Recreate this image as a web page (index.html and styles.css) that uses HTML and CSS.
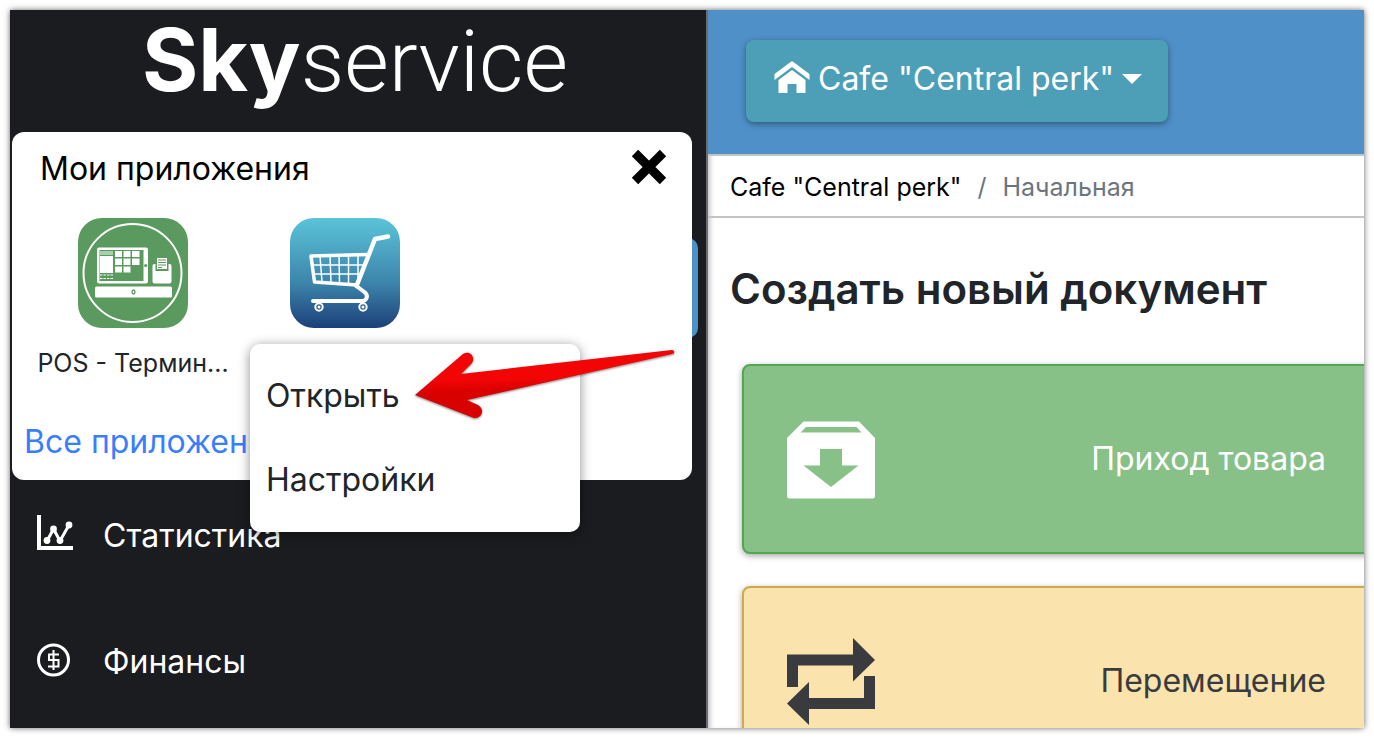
FILE: index.html
```html
<!DOCTYPE html>
<html lang="ru">
<head>
    <meta charset="UTF-8">
    <meta name="viewport" content="width=device-width, initial-scale=1.0">
    <title>Skyservice</title>
    <link rel="stylesheet" href="styles.css">
</head>
<body>
    <div class="window">
        <aside class="sidebar">
            <a href="#" class="logo"><b>Sky</b>service</a>
            <nav>
                <ul class="menu">
                    <li class="active"></li>
                    <li></li>
                    <li>
                        <a href="#">
                            <svg class="menu-icon" viewBox="0 0 36 36">
                                <path d="M2 0v33h34" fill="none" stroke="#fff" stroke-width="4"/>
                                <path d="M10 26l6.500-12 6.500 12L32 10" fill="none" stroke="#fff" stroke-width="3"/>
                                <g fill="#fff">
                                    <circle cx="10" cy="25.500" r="3.400"/>
                                    <circle cx="16.500" cy="14" r="3.400"/>
                                    <circle cx="23" cy="25.500" r="3.400"/>
                                    <circle cx="32" cy="10" r="3.400"/>
                                </g>
                            </svg>
                            Статистика
                        </a>
                    </li>
                    <li>
                        <a href="#">
                            <svg class="menu-icon" viewBox="0 0 36 36">
                                <circle cx="16.500" cy="19" r="15" fill="none" stroke="#fff" stroke-width="3"/>
                                <path d="M22 13.500H12v5.500h9.500v6.500H11M16.500 9v20" fill="none" stroke="#fff" stroke-width="2"/>
                            </svg>
                            Финансы
                        </a>
                    </li>
                </ul>
            </nav>

            <section class="apps">
                <div class="apps-head">
                    <h2>Мои приложения</h2>
                    <button class="close" aria-label="Закрыть">
                        <svg viewBox="0 0 36 36"><path d="M4 4l28 28M32 4L4 32" stroke="#000" stroke-width="9"/></svg>
                    </button>
                </div>
                <div class="apps-list">
                    <a href="#" class="app">
                        <svg viewBox="0 0 110 110">
                            <rect width="110" height="110" rx="24" fill="#5a9a5e"/>
                            <circle cx="54.500" cy="55" r="49" fill="none" stroke="#fff" stroke-width="2"/>
                            <rect x="19" y="29.500" width="51" height="36" rx="2" fill="#fff"/>
                            <path d="M21.500 32h44v31h-44z" fill="#5a9a5e"/>
                            <path d="M22 38h13v17H22zM22 33.500h13v1H22zM22 35.500h13v1H22z" fill="#fff"/>
                            <path d="M22 57h13M22 60.500h13" stroke="#fff" stroke-width="1" stroke-dasharray="2.500 1"/>
                            <path d="M37 33h7v6h-7zM45.500 33h7v6h-7zM54 33h7.500v6H54zM37 40.500h7v6.500h-7zM45.500 40.500h7v6.500h-7zM54 40.500h7.500v6.500H54zM37 48.500h7v6h-7zM45.500 48.500h7v6h-7z" fill="#fff"/>
                            <circle cx="67.700" cy="47.500" r="1.600" fill="#5a9a5e"/>
                            <rect x="74.500" y="46" width="19" height="19.500" rx="2" fill="#fff"/>
                            <path d="M77.500 39h13v14h-13z" fill="#5a9a5e"/>
                            <path d="M79 40h10v11H79z" fill="#fff"/>
                            <path d="M80 42h8M80 44.500h8M80 47h8M80 49.500h4" stroke="#5a9a5e"/>
                            <rect x="17" y="68.500" width="77" height="11" rx="1.500" fill="#fff"/>
                            <ellipse cx="55.500" cy="74" rx="1.500" ry="2" fill="none" stroke="#5a9a5e" stroke-width="1.300"/>
                        </svg>
                        <span>POS - Термин...</span>
                    </a>
                    <a href="#" class="app">
                        <svg viewBox="0 0 110 110">
                            <defs>
                                <linearGradient id="sea" x1="0" y1="0" x2="0" y2="1">
                                    <stop offset="0" stop-color="#5ac4d9"/>
                                    <stop offset=".6" stop-color="#3c83aa"/>
                                    <stop offset="1" stop-color="#1b4079"/>
                                </linearGradient>
                            </defs>
                            <rect width="110" height="110" rx="24" fill="url(#sea)"/>
                            <g fill="none" stroke="#fff" stroke-linecap="round" stroke-linejoin="round">
                                <path d="M98 18.500l-13 2.500L66.500 68" stroke-width="4.500"/>
                                <path d="M78 36.500l-57 1.500 3.500 26L67 67" stroke-width="3.500"/>
                                <path d="M22 47h53M23 56h49M30 38l2 26M40 38l1 26M49 37l.500 28M58.500 37v29M68 37v27" stroke-width="1.500"/>
                                <path d="M67 68.500l8 6c4 4 1 8.500-3 8.500H23" stroke-width="4"/>
                                <circle cx="29" cy="89" r="3.700" stroke-width="2"/>
                                <circle cx="73" cy="89" r="3.700" stroke-width="2"/>
                            </g>
                            <g fill="#fff">
                                <circle cx="29" cy="89" r="1.500"/>
                                <circle cx="73" cy="89" r="1.500"/>
                            </g>
                        </svg>
                    </a>
                </div>
                <a href="#" class="all-apps">Все приложения</a>

                <div class="popup">
                    <a href="#">Открыть</a>
                    <a href="#">Настройки</a>
                </div>
                <svg class="arrow" viewBox="0 0 262 70">
                    <defs>
                        <linearGradient id="red" x1="0" y1="0" x2=".1" y2="1">
                            <stop offset=".45" stop-color="#f30505"/>
                            <stop offset=".62" stop-color="#d90000"/>
                        </linearGradient>
                    </defs>
                    <path d="M1 45L49 4c6-4 13 2 9 9L47 24 258 0c3 0 3 4 0 4L53 50l11 5c8 5 3 14-4 13z" fill="url(#red)"/>
                </svg>
            </section>
        </aside>

        <main>
            <header>
                <button class="cafe">
                    <svg class="home" viewBox="0 0 36 32">
                        <path d="M18 0L.500 13v6L18 6l17.500 13v-6z" fill="#fff"/>
                        <path d="M18 9L4.500 19v13h9v-9h9v9h9V19z" fill="#fff"/>
                    </svg>
                    Cafe "Central perk"
                    <span class="caret"></span>
                </button>
            </header>
            <nav class="breadcrumb">
                <a href="#">Cafe "Central perk"</a>
                <span>/</span>
                <span>Начальная</span>
            </nav>
            <h1>Создать новый документ</h1>
            <div class="cards">
                <a href="#" class="card income">
                    <svg viewBox="0 0 88 88">
                        <path d="M16.500 6.500h55.500L88 23v58q0 2.500-2.500 2.500h-83Q0 83.500 0 81V23zM19 12l-5.500 5.500h61L69.500 12zM33 34v16.500H16.500L44 72l27.500-21.500H55V34z" fill="#fff" fill-rule="evenodd"/>
                    </svg>
                    Приход товара
                </a>
                <a href="#" class="card transfer">
                    <svg viewBox="0 0 88 88">
                        <path d="M0 50V17.500h66V1l22 22-22 21.500V28.500H11V50zM88 39v33H22v16L0 66.500 22 45v16h55V39z" fill="#3a3b3f"/>
                    </svg>
                    Перемещение
                </a>
            </div>
        </main>
    </div>
</body>
</html>
```
FILE: styles.css
```css
* {
    box-sizing: border-box;
}
body {
    font-family: Inter, "Liberation Sans", sans-serif;
    font-size: 32px;
    line-height: 40px;
    color: #212529;
    background: #fff;
    margin: 0;
    padding: 10px;
    overflow: hidden;
}
a {
    color: inherit;
    text-decoration: none;
}
h1, h2 {
    margin: 0;
}
.window {
    display: flex;
    height: calc(100vh - 20px);
    overflow: hidden;
    box-shadow: 0 0 6px rgba(0, 0, 0, 0.6);
}

/* sidebar */
.sidebar {
    position: relative;
    flex: 0 0 698px;
    background: #1b1c20;
    border-right: 2px solid #6c6d70;
    color: #fff;
}
.logo {
    display: block;
    height: 122px;
    padding: 6px 0 0 132px;
    font-family: Roboto, sans-serif;
    font-size: 86px;
    line-height: 88px;
    font-weight: 300;
}
.logo b {
    font-family: Inter, sans-serif;
    font-weight: 700;
}
.menu {
    list-style: none;
    margin: 106px 8px 0 12px;
    padding: 0;
}
.menu li {
    height: 100px;
    margin-bottom: 26px;
    border-radius: 10px;
}
.menu .active {
    background: #4f90c9;
}
.menu a {
    display: flex;
    align-items: center;
    gap: 30px;
    height: 92px;
    padding-left: 15px;
}
.menu-icon {
    width: 36px;
    height: 36px;
    margin-bottom: 6px;
}

/* applications panel */
.apps {
    position: absolute;
    top: 122px;
    left: 2px;
    right: 14px;
    height: 348px;
    background: #fff;
    border-radius: 12px;
    color: #212529;
}
.apps-head {
    display: flex;
    justify-content: space-between;
    padding: 17px 25px 0 28px;
    height: 86px;
}
.apps-head h2 {
    font-size: 32px;
    font-weight: 400;
    color: #000;
}
.close {
    width: 36px;
    height: 36px;
    padding: 0;
    border: none;
    background: none;
    cursor: pointer;
}
.close svg {
    display: block;
}
.apps-list {
    display: flex;
    padding-left: 15px;
    height: 204px;
}
.app {
    width: 212px;
    font-size: 25px;
    line-height: 30px;
    text-align: center;
}
.app svg {
    display: block;
    width: 110px;
    height: 110px;
    margin: 0 auto 20px;
}
.all-apps {
    margin-left: 12px;
    color: #3a7efd;
}
.popup {
    position: absolute;
    top: 212px;
    left: 238px;
    width: 330px;
    height: 188px;
    padding: 10px 0;
    background: #fff;
    border-radius: 10px;
    box-shadow: 0 2px 12px rgba(0, 0, 0, 0.45);
}
.popup a {
    display: block;
    padding: 0 16px;
    line-height: 84px;
}
.arrow {
    position: absolute;
    top: 218px;
    left: 402px;
    width: 262px;
    height: 70px;
    filter: drop-shadow(0 1px 1px rgba(0, 0, 0, 0.5));
}

/* content */
main {
    flex: 1;
    min-width: 0;
    overflow: hidden;
    box-shadow: inset 5px 0 5px -3px rgba(0, 0, 0, 0.25);
}
header {
    height: 146px;
    padding: 30px 38px;
    background: #4f90c9;
    border-bottom: 2px solid #c4c4c4;
}
.cafe {
    display: flex;
    align-items: center;
    gap: 8px;
    height: 82px;
    padding: 0 26px 4px 28px;
    border: none;
    border-radius: 8px;
    background: #4c9fb6;
    box-shadow: 0 2px 6px rgba(0, 0, 0, 0.4);
    color: #fff;
    font: inherit;
    white-space: nowrap;
    cursor: pointer;
}
.home {
    width: 36px;
    height: 32px;
    margin-bottom: 4px;
}
.caret {
    border: 10px solid transparent;
    border-top-color: #fff;
    border-bottom: none;
}
.breadcrumb {
    display: flex;
    gap: 16px;
    height: 62px;
    padding-left: 22px;
    border-bottom: 2px solid #c4c4c4;
    font-size: 25px;
    line-height: 62px;
    color: #6c757d;
}
.breadcrumb a {
    color: #000;
}
h1 {
    padding: 43px 0 0 22px;
    font-size: 42px;
    line-height: 56px;
    font-weight: 600;
    white-space: nowrap;
}
.cards {
    padding: 47px 0 0 34px;
    margin-right: -20px;
}
.card {
    display: flex;
    align-items: center;
    justify-content: space-between;
    height: 190px;
    margin-bottom: 32px;
    padding: 0 56px 0 43px;
    border: 2px solid;
    border-radius: 8px;
    box-shadow: 0 2px 6px rgba(0, 0, 0, 0.35);
}
.card svg {
    width: 88px;
    height: 88px;
}
.income {
    background: #87c187;
    border-color: #53a653;
    color: #fff;
}
.transfer {
    background: #fae3ac;
    border-color: #d0a94d;
    color: #3a3b3f;
}
```
